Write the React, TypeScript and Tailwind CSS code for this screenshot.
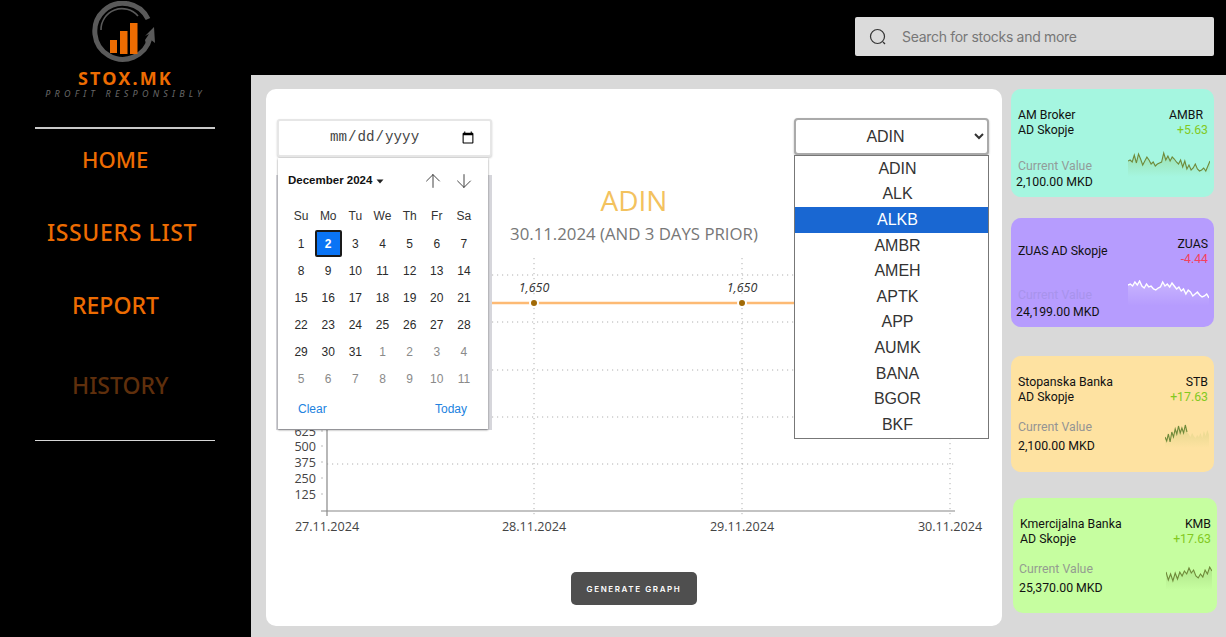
import { ArrowDown, ArrowUp } from 'lucide-react';

const tickers = ['ADIN', 'ALK', 'ALKB', 'AMBR', 'AMEH', 'APTK', 'APP', 'AUMK', 'BANA', 'BGOR', 'BKF'];
const weekDays = ['Su', 'Mo', 'Tu', 'We', 'Th', 'Fr', 'Sa'];
const dateLabels = [
  { x: 327, label: '27.11.2024' },
  { x: 534, label: '28.11.2024' },
  { x: 742, label: '29.11.2024' },
  { x: 950, label: '30.11.2024' },
];
const yLabels = [
  { y: 432, label: '625' },
  { y: 447, label: '500' },
  { y: 463, label: '375' },
  { y: 479, label: '250' },
  { y: 495, label: '125' },
];

const calendarDays = [
  ...Array.from({ length: 31 }, (_, i) => ({ day: i + 1, muted: false })),
  ...Array.from({ length: 11 }, (_, i) => ({ day: i + 1, muted: true })),
];

const wavyA = [9, 8, 10, 3, 11, 2, 7, 13, 9, 5, 8, 12, 10, 14, 12, 11, 10, 1, 8, 4, 9, 5, 7, 10, 12, 8, 15, 9, 17, 13, 18, 16, 12, 17, 19, 18, 16, 19, 14, 9];
const wavyB = [4, 3, 5, 1, 4, 0, 5, 7, 3, 6, 5, 8, 9, 7, 6, 1, 5, 3, 6, 2, 5, 8, 6, 10, 8, 13, 9, 11, 15, 13, 11, 14, 16, 15, 13, 17];
const wavyC = [14, 18, 11, 19, 9, 14, 6, 11, 3, 10, 5, 10, 2, 9, 11, 14, 10, 13, 15, 12, 14, 10, 15, 8, 13, 7, 12];
const wavyD = [7, 15, 9, 16, 8, 14, 7, 11, 6, 9, 3, 8, 5, 11, 13, 9, 12, 5, 9, 2, 6];

function Sparkline({
  id,
  data,
  width,
  color,
  fill,
  lineUntil,
  strokeWidth = 1.1,
  className,
}: {
  id: string;
  data: number[];
  width: number;
  color: string;
  fill: string;
  lineUntil?: number;
  strokeWidth?: number;
  className?: string;
}) {
  const step = width / (data.length - 1);
  const coords = data.map((value, i) => `${(i * step).toFixed(1)},${value + 1}`);
  const line = lineUntil ? coords.slice(0, lineUntil) : coords;

  return (
    <svg width={width} height={34} viewBox={`0 0 ${width} 34`} className={className}>
      <defs>
        <linearGradient id={id} x1="0" y1="0" x2="0" y2="1">
          <stop offset="0" stopColor={fill} stopOpacity="0.4" />
          <stop offset="0.85" stopColor={fill} stopOpacity="0" />
        </linearGradient>
      </defs>
      <polygon points={`0,30 ${coords.join(' ')} ${width},30`} fill={`url(#${id})`} />
      <polyline points={line.join(' ')} fill="none" stroke={color} strokeWidth={strokeWidth} />
    </svg>
  );
}

function StockCard({
  name,
  ticker,
  change,
  changeClass,
  bg,
  labelClass,
  gapClass,
  valueClass,
  value,
  tickerClass,
  spark,
}: {
  name: string[];
  ticker: string;
  change: string;
  changeClass: string;
  bg: string;
  labelClass: string;
  gapClass: string;
  valueClass: string;
  value: string;
  tickerClass?: string;
  spark: React.ReactNode;
}) {
  return (
    <div className={`relative rounded-[10px] pl-[7px] pr-[6px] pt-[19px] text-[12.3px] leading-[14.5px] text-[#111] ${bg}`}>
      <div className="flex h-[29px] items-center justify-between">
        <div>
          {name.map((line) => (
            <div key={line}>{line}</div>
          ))}
        </div>
        <div className="text-right">
          <div className={tickerClass}>{ticker}</div>
          <div className={changeClass}>{change}</div>
        </div>
      </div>
      <div className={gapClass}>
        <div className={`leading-[16px] ${labelClass}`}>Current Value</div>
        <div className={valueClass}>{value}</div>
      </div>
      {spark}
    </div>
  );
}

function Chart() {
  return (
    <svg width={713} height={290} viewBox="277 255 713 290" className="block">
      <g stroke="#b0b0b0" strokeWidth="1" strokeDasharray="1.2 3.8">
        {[275, 322, 370, 417, 464].map((y) => (
          <line key={y} x1={327} x2={955} y1={y} y2={y} />
        ))}
        {[534, 742, 950].map((x) => (
          <line key={x} x1={x} x2={x} y1={258} y2={518} />
        ))}
      </g>
      <line x1={327} x2={950} y1={303} y2={303} stroke="#fdba74" strokeWidth="2.5" />
      {[534, 742].map((x) => (
        <g key={x}>
          <circle cx={x} cy={303} r="5" fill="#fff" />
          <circle cx={x} cy={303} r="3" fill="#a16a07" />
          <text x={x} y={292} textAnchor="middle" fontSize="12.5" fontStyle="italic" fill="#333" fontFamily="Open Sans, sans-serif">
            1,650
          </text>
        </g>
      ))}
      <line x1={327} x2={327} y1={258} y2={516} stroke="#888" strokeWidth="1.2" />
      <line x1={321} x2={955} y1={511} y2={511} stroke="#888" strokeWidth="1.2" />
      {yLabels.map((item) => (
        <g key={item.label}>
          <text x={316} y={item.y + 4} textAnchor="end" fontSize="12.6" fill="#444" fontFamily="Open Sans, sans-serif">
            {item.label}
          </text>
          <line x1={321} x2={323} y1={item.y - 1} y2={item.y - 1} stroke="#bbb" />
        </g>
      ))}
      {dateLabels.map((item) => (
        <text key={item.label} x={item.x} y={531} textAnchor="middle" fontSize="12.6" fill="#444" fontFamily="Open Sans, sans-serif">
          {item.label}
        </text>
      ))}
    </svg>
  );
}

function Calendar() {
  return (
    <>
      <div className="absolute left-[10px] top-[86px] h-[255px] w-[216px] bg-[#d6d6db]" />
      <div className="absolute left-[12px] top-[69px] h-[271px] w-[210px] bg-white shadow-[0_1px_2px_rgba(0,0,0,0.45)] font-['Liberation_Sans',sans-serif]">
        <div className="flex h-[44px] items-center pl-[10px] pt-[2px]">
          <span className="text-[11.5px] font-bold text-[#111]">December 2024</span>
          <svg width="8" height="5" viewBox="0 0 8 5" className="ml-[4px]">
            <polygon points="0.5,0.5 7.5,0.5 4,4.5" fill="#222" />
          </svg>
          <ArrowUp size={22} strokeWidth={1} className="ml-[38px] text-[#333]" />
          <ArrowDown size={22} strokeWidth={1} className="ml-[9px] text-[#333]" />
        </div>
        <div className="ml-[9.5px] grid w-[190px] grid-cols-7 grid-rows-[28px] auto-rows-[27px] text-center text-[12px]">
          {weekDays.map((day) => (
            <div key={day} className="flex items-start justify-center pt-[5px] text-[#333]">
              {day}
            </div>
          ))}
          {calendarDays.map((item, i) => (
            <div key={i} className="flex items-center justify-center">
              {item.day === 2 && !item.muted ? (
                <span className="flex h-[27px] w-[27px] items-center justify-center rounded-[2px] border-2 border-[#1a1a1a] bg-[#0a74f5] font-bold text-white">
                  2
                </span>
              ) : (
                <span className={item.muted ? 'text-[#8a8a8a]' : 'text-[#2b2b2b]'}>{item.day}</span>
              )}
            </div>
          ))}
        </div>
        <div className="flex justify-between pl-[20px] pr-[21px] pt-[8px] text-[12px] text-[#2182e0]">
          <span>Clear</span>
          <span>Today</span>
        </div>
      </div>
    </>
  );
}

function Logo() {
  return (
    <svg width="70" height="62" viewBox="88 2 70 62" className="block">
      <path d="M 148 20 A 28 28 0 1 0 150 39" fill="none" stroke="#5a5a5a" strokeWidth="5" />
      <path d="M 101 31 A 21 21 0 0 1 138 17" fill="none" stroke="#5a5a5a" strokeWidth="1.6" />
      <polygon points="154,28 155,44 150,40 146,45 145,41 149,35 145,37" fill="#5a5a5a" />
      <rect x="110" y="41" width="7" height="13" fill="#ed6c02" />
      <rect x="120" y="32" width="7.5" height="23" fill="#ed6c02" />
      <rect x="130" y="24" width="7.5" height="31" fill="#ed6c02" />
    </svg>
  );
}

export default function App() {
  return (
    <div className="flex h-[637px] w-[1226px] overflow-hidden bg-black">
      <aside className="w-[251px] shrink-0 font-['Noto_Sans',sans-serif]">
        <div className="flex flex-col items-center pt-[1px]">
          <div className="pr-[5px]">
            <Logo />
          </div>
          <div className="mt-[5px] text-[18px] font-bold leading-[20px] tracking-[0.12em] text-[#ed6c02]">STOX.MK</div>
          <div className="text-[9px] italic leading-[12px] tracking-[0.47em] text-[#686868]">PROFIT RESPONSIBLY</div>
        </div>
        <div className="ml-[35px] mt-[27px] h-[2px] w-[180px] bg-[#c9c9c9]" />
        <nav className="text-[23px] font-medium leading-[32px] text-[#ed6c02]">
          <div className="ml-[82px] mt-[14px] text-[22px]">HOME</div>
          <div className="ml-[47px] mt-[41px] tracking-[0.028em]">ISSUERS LIST</div>
          <div className="ml-[72px] mt-[41px]">REPORT</div>
          <div className="ml-[72px] mt-[48px] text-[#5f2f0c]">HISTORY</div>
        </nav>
        <div className="ml-[35px] mt-[39px] h-px w-[180px] bg-[#d6d6d6]" />
      </aside>

      <div className="flex min-w-0 flex-1 flex-col">
        <header className="flex h-[75px] shrink-0 justify-end pr-[12px] pt-[17px]">
          <div className="flex h-[39px] w-[359px] items-center rounded-[2px] bg-[#dbdbdb] pl-[14px] font-['Inter',sans-serif] text-[14px] tracking-[-0.3px] text-[#777]">
            <svg width="18" height="18" viewBox="0 0 18 18" fill="none" stroke="#333" strokeWidth="1.2">
              <circle cx="8.5" cy="8.5" r="7" />
              <path d="M14 14l2 2" />
            </svg>
            <span className="ml-[15px]">Search for stocks and more</span>
          </div>
        </header>

        <main className="flex flex-1 bg-[#d9d9d9] pl-[15px] pt-[14px]">
          <section className="relative h-[537px] w-[736px] rounded-[10px] bg-white px-[11px] pt-[30px]">
            <div className="flex items-start justify-between">
              <input
                type="date"
                className="h-[38px] w-[215px] rounded-[3px] border-2 border-[#e6e6e6] bg-white pl-[50px] pr-[13px] font-['Liberation_Mono',monospace] text-[14.2px] text-[#444] shadow-[0_1px_2px_rgba(0,0,0,0.2)]"
              />
              <select
                defaultValue="ADIN"
                className="mr-[2px] -mt-[1px] h-[37px] w-[195px] rounded-[4px] border-2 border-[#aaa] bg-white text-center font-['Liberation_Sans',sans-serif] text-[16px] text-[#333] shadow-[0_1px_2px_rgba(0,0,0,0.3)]"
              >
                {tickers.map((ticker) => (
                  <option key={ticker}>{ticker}</option>
                ))}
              </select>
            </div>

            <div className="mt-[25px] text-center font-['Open_Sans',sans-serif] text-[28px] leading-[36px] text-[#f3c25e]">ADIN</div>
            <div className="mt-[4px] text-center font-['Open_Sans',sans-serif] text-[16.8px] leading-[24px] text-[#777]">
              30.11.2024 (AND 3 DAYS PRIOR)
            </div>
            <div className="mt-[9px]">
              <Chart />
            </div>
            <div className="mt-[27px] flex justify-center">
              <button
                type="button"
                className="h-[33px] w-[126px] rounded-[5px] bg-[#4f4f4f] font-['Inter',sans-serif] text-[8px] font-semibold tracking-[0.2em] text-white"
              >
                GENERATE GRAPH
              </button>
            </div>

            <Calendar />

            <div className="absolute left-[528px] top-[66px] w-[195px] border border-[#777] bg-white font-['Liberation_Sans',sans-serif] text-[16px] text-[#333]">
              {tickers.map((ticker) => (
                <div
                  key={ticker}
                  className={`flex h-[25.6px] items-center justify-center pl-[12px] ${ticker === 'ALKB' ? 'bg-[#1967d2] text-white' : ''}`}
                >
                  {ticker}
                </div>
              ))}
            </div>
          </section>

          <div className="ml-[9px] w-[203px] shrink-0 font-['Roboto',sans-serif]">
            <div className="h-[108px]">
              <StockCard
                name={['AM Broker', 'AD Skopje']}
                ticker="AMBR"
                tickerClass="pr-[5px]"
                change="+5.63"
                changeClass="text-[#82c91e]"
                bg="h-full bg-[#a5f6e0]"
                labelClass="text-[#929c9a]"
                gapClass="mt-[21px]"
                valueClass="-ml-[2px] leading-[16px]"
                value="2,100.00 MKD"
                spark={<Sparkline id="spark-a" data={wavyA} width={82} color="#6f8a3a" fill="#8fc06a" className="absolute left-[117px] top-[62px]" />}
              />
            </div>
            <div className="mt-[21px] h-[109px]">
              <StockCard
                name={['ZUAS AD Skopje']}
                ticker="ZUAS"
                change="-4.44"
                changeClass="text-[#f5405e]"
                bg="h-full bg-[#b69cfe]"
                labelClass="text-[#a893ec]"
                gapClass="mt-[21px]"
                valueClass="-ml-[2px] leading-[18px]"
                value="24,199.00 MKD"
                spark={<Sparkline id="spark-b" data={wavyB} width={81} color="#ffffff" fill="#e4d9ff" strokeWidth={1.4} className="absolute left-[117px] top-[62px]" />}
              />
            </div>
            <div className="mt-[29px] h-[116px]">
              <StockCard
                name={['Stopanska Banka', 'AD Skopje']}
                ticker="STB"
                change="+17.63"
                changeClass="text-[#82c91e]"
                bg="h-full bg-[#fee2a1]"
                labelClass="text-[#949494]"
                gapClass="mt-[15px]"
                valueClass="mt-[3px] leading-[16px]"
                value="2,100.00 MKD"
                spark={<Sparkline id="spark-c" data={wavyC} width={44} color="#6f8a3a" fill="#b8c46a" lineUntil={14} className="absolute left-[154px] top-[66px]" />}
              />
            </div>
            <div className="ml-[2px] mt-[26px] h-[115px] w-[204px]">
              <StockCard
                name={['Kmercijalna Banka', 'AD Skopje']}
                ticker="KMB"
                change="+17.63"
                changeClass="text-[#82c91e]"
                bg="h-full bg-[#c6fea0]"
                labelClass="text-[#949c90]"
                gapClass="mt-[15px] -ml-[1px]"
                valueClass="mt-[3px] leading-[16px]"
                value="25,370.00 MKD"
                spark={<Sparkline id="spark-d" data={wavyD} width={46} color="#6f8a3a" fill="#8fc06a" className="absolute left-[153px] top-[66px]" />}
              />
            </div>
          </div>
        </main>
      </div>
    </div>
  );
}
